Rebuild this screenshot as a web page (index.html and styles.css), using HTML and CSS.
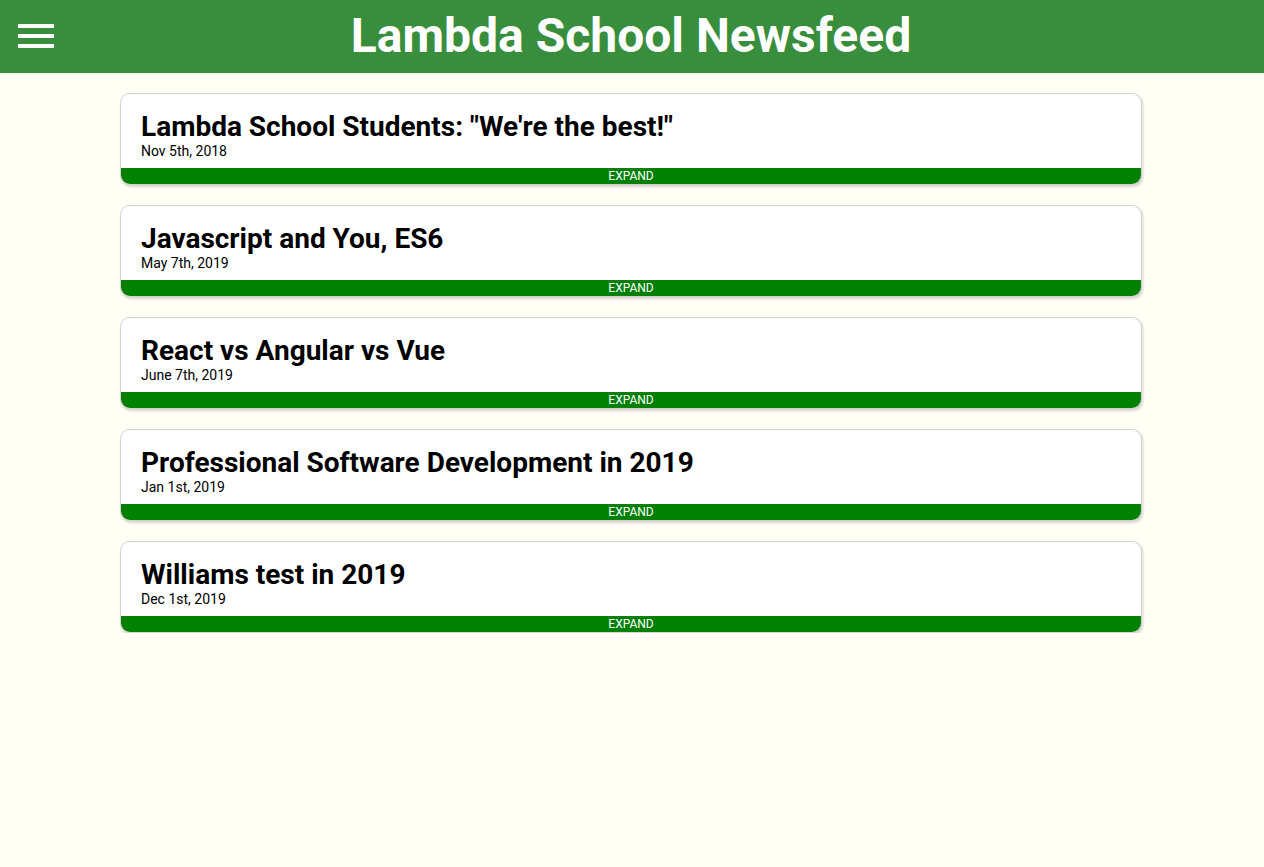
FILE: index.html
```html
<!DOCTYPE html>
<html lang="en">
<head>
<meta charset="utf-8">
<title>Lambda School Newsfeed</title>
<link rel="stylesheet" href="styles.css">
</head>
<body>
<header class="header">
  <button class="menu-button" aria-label="Menu">
    <svg width="36" height="24" viewBox="0 0 36 24"><rect x="0" y="0" width="36" height="4" fill="#fff"/><rect x="0" y="10" width="36" height="4" fill="#fff"/><rect x="0" y="20" width="36" height="4" fill="#fff"/></svg>
  </button>
  <h1 class="header-title">Lambda School Newsfeed</h1>
</header>
<main class="articles">
  <article class="article">
    <div class="article-body">
      <h2 class="article-title">Lambda School Students: "We're the best!"</h2>
      <p class="article-date">Nov 5th, 2018</p>
    </div>
    <div class="expand-button">EXPAND</div>
  </article>
  <article class="article">
    <div class="article-body">
      <h2 class="article-title">Javascript and You, ES6</h2>
      <p class="article-date">May 7th, 2019</p>
    </div>
    <div class="expand-button">EXPAND</div>
  </article>
  <article class="article">
    <div class="article-body">
      <h2 class="article-title">React vs Angular vs Vue</h2>
      <p class="article-date">June 7th, 2019</p>
    </div>
    <div class="expand-button">EXPAND</div>
  </article>
  <article class="article">
    <div class="article-body">
      <h2 class="article-title">Professional Software Development in 2019</h2>
      <p class="article-date">Jan 1st, 2019</p>
    </div>
    <div class="expand-button">EXPAND</div>
  </article>
  <article class="article">
    <div class="article-body">
      <h2 class="article-title">Williams test in 2019</h2>
      <p class="article-date">Dec 1st, 2019</p>
    </div>
    <div class="expand-button">EXPAND</div>
  </article>
</main>
</body>
</html>
```

FILE: styles.css
```css
* { box-sizing: border-box; }

body {
  margin: 0;
  background: #fffff5;
  font-family: Roboto, "Liberation Sans", Arial, sans-serif;
  color: #000;
}

.header {
  position: relative;
  height: 73px;
  background: #388e3c;
  display: flex;
  align-items: flex-start;
  justify-content: center;
}

.menu-button {
  position: absolute;
  left: 18px;
  top: 24px;
  width: 36px;
  height: 24px;
  padding: 0;
  border: 0;
  background: none;
  display: block;
}

.menu-button svg { display: block; }

.header-title {
  margin: 0;
  font-size: 48px;
  font-weight: 700;
  line-height: 72px;
  color: #fff;
  transform: translateX(-1px);
}

.articles {
  width: 1022px;
  margin: 20px auto 0;
  display: flex;
  flex-direction: column;
  gap: 20px;
  transform: translateX(-1px);
}

.article {
  background: #fff;
  border: 1px solid #d3d3d3;
  border-radius: 10px;
  overflow: hidden;
  box-shadow: 1px 2px 3px rgba(0, 0, 0, 0.18);
}

.article-body {
  padding: 17px 20px 9px;
}

.article-title {
  margin: 0;
  font-size: 28px;
  font-weight: 700;
  line-height: 32px;
}

.article-date {
  margin: 0;
  font-size: 14px;
  line-height: 16px;
}

.expand-button {
  height: 16px;
  background: #008000;
  color: #fff;
  font-size: 12px;
  font-weight: 400;
  line-height: 16px;
  text-align: center;
}
```
